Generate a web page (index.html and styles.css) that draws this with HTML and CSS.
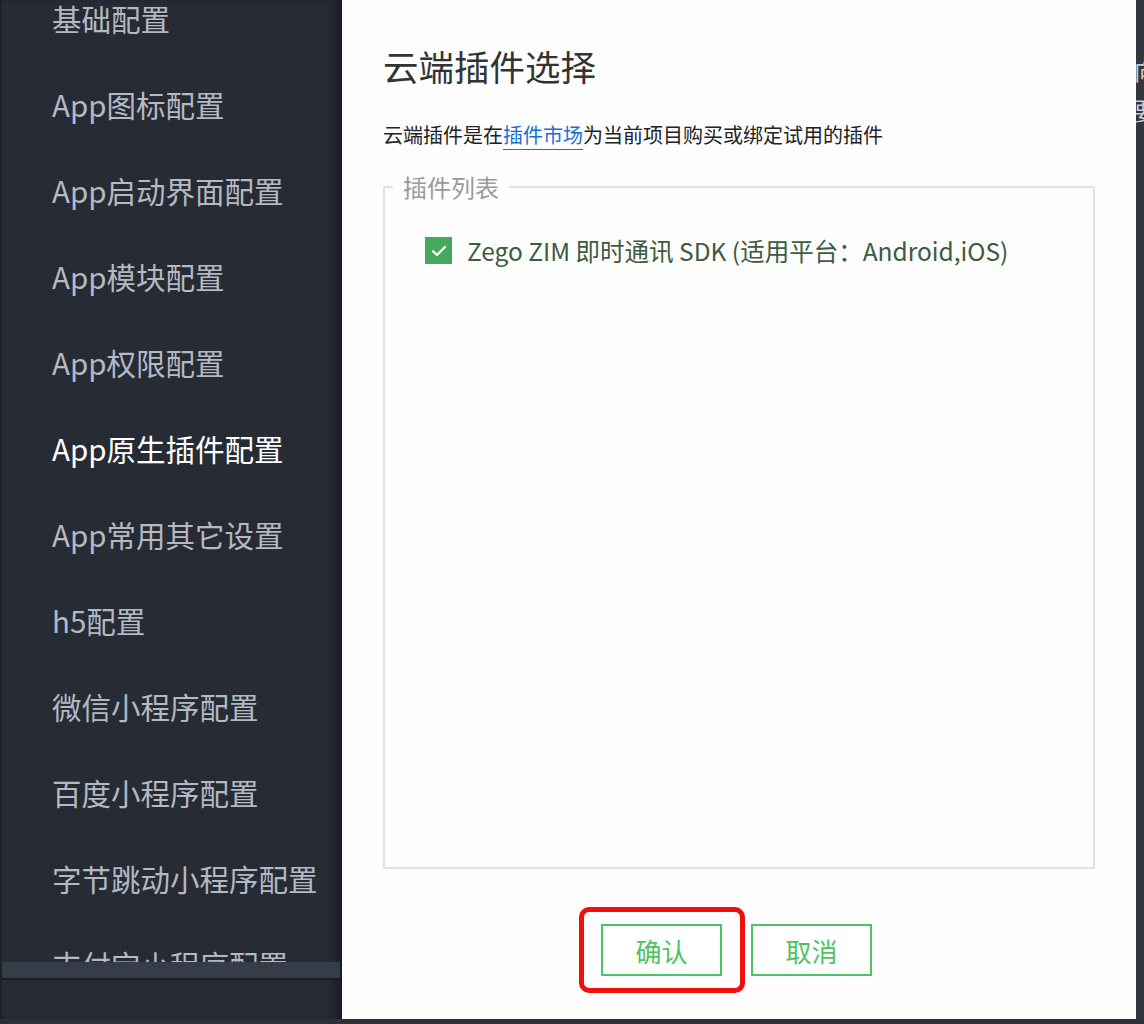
FILE: index.html
```html
<!DOCTYPE html>
<html lang="zh-CN">
<head>
    <meta charset="UTF-8">
    <title>云端插件选择</title>
    <link rel="stylesheet" href="styles.css">
</head>
<body>
    <div class="page">
        <div class="sidebar">
            <div class="menu-wrap">
                <ul class="menu">
                    <li>基础配置</li>
                    <li>App图标配置</li>
                    <li>App启动界面配置</li>
                    <li>App模块配置</li>
                    <li>App权限配置</li>
                    <li class="active">App原生插件配置</li>
                    <li>App常用其它设置</li>
                    <li>h5配置</li>
                    <li>微信小程序配置</li>
                    <li>百度小程序配置</li>
                    <li>字节跳动小程序配置</li>
                    <li>支付宝小程序配置</li>
                </ul>
            </div>
            <div class="hscroll"></div>
        </div>
        <div class="dialog">
            <h1 class="title">云端插件选择</h1>
            <p class="desc">云端插件是在<a href="#">插件市场</a>为当前项目购买或绑定试用的插件</p>
            <fieldset class="plugin-box">
                <legend>插件列表</legend>
                <label class="plugin-item">
                    <span class="check">
                        <svg width="16" height="12" viewBox="0 0 16 12"><path d="M2 6.2l4 3.8 8-8" fill="none" stroke="#fff" stroke-width="2.2" stroke-linecap="round" stroke-linejoin="round"/></svg>
                    </span>
                    Zego ZIM 即时通讯 SDK (适用平台：Android,iOS)
                </label>
            </fieldset>
            <div class="btns">
                <div class="hl">
                    <button class="btn">确认</button>
                </div>
                <button class="btn">取消</button>
            </div>
        </div>
        <div class="side-right">
            <span>向</span>
            <span>要</span>
        </div>
    </div>
</body>
</html>
```
FILE: styles.css
```css
* {
    margin: 0;
    padding: 0;
    box-sizing: border-box;
}
ul li {
    list-style: none;
}
body {
    width: 1144px;
    height: 1024px;
    overflow: hidden;
    background: #2d3037;
    font-family: "Noto Sans CJK SC", "Noto Sans", sans-serif;
}
.page {
    display: flex;
    height: 1019px;
}
.sidebar {
    width: 342px;
    background: #272b34;
    border-left: 2px solid #1e2127;
    box-shadow: inset -10px 0 10px -6px #15171b;
    display: flex;
    flex-direction: column;
}
.menu-wrap {
    height: 962px;
    overflow: hidden;
}
.menu {
    margin-top: -25px;
}
.menu li {
    height: 86px;
    line-height: 86px;
    padding-left: 50px;
    font-size: 29.5px;
    color: #b4b9c4;
    white-space: nowrap;
}
.menu li.active {
    color: #fff;
}
.hscroll {
    height: 18px;
    background: #363c48;
    border-bottom: 2px solid #1b1d22;
    margin-right: 2px;
}
.dialog {
    width: 794px;
    background: #fdfdfd;
    padding: 44px 41px 0 41px;
    display: flex;
    flex-direction: column;
}
.title {
    font-size: 35.5px;
    font-weight: normal;
    color: #333;
    line-height: 44px;
}
.desc {
    margin-top: 34px;
    font-size: 20px;
    line-height: 26px;
    color: #222;
}
.desc a {
    color: #1a6ed8;
    text-decoration: none;
    border-bottom: 1px solid #1a6ed8;
}
.plugin-box {
    margin-top: 24px;
    width: 712px;
    height: 697px;
    border: 2px solid #e2e2e2;
    padding: 31px 40px 0 40px;
}
.plugin-box legend {
    margin-left: -32px;
    padding: 0 10px;
    font-size: 24px;
    line-height: 30px;
    color: #9a9a9a;
}
.plugin-item {
    display: flex;
    align-items: center;
    gap: 15px;
    font-size: 24.5px;
    color: #3e5a41;
    white-space: nowrap;
}
.check {
    width: 27px;
    height: 27px;
    background: #45a95e;
    display: flex;
    align-items: center;
    justify-content: center;
}
.btns {
    display: flex;
    justify-content: center;
    align-items: center;
    margin-top: 38px;
    gap: 6px;
    margin-left: -27px;
}
.hl {
    border: 5px solid #f40f0f;
    border-radius: 10px;
    padding: 12px 18px 12px 17px;
}
.btn {
    width: 121px;
    height: 52px;
    background: #fff;
    border: 2px solid #4cc462;
    color: #4cc462;
    font-size: 26px;
    font-family: "Noto Sans CJK SC", "Noto Sans", sans-serif;
}
.side-right {
    width: 8px;
    background: #33363e;
    overflow: hidden;
    padding-top: 50px;
    display: flex;
    flex-direction: column;
    color: #c8cad0;
    font-size: 24px;
    line-height: 40px;
}
.side-right span {
    margin-left: -2px;
}
```
